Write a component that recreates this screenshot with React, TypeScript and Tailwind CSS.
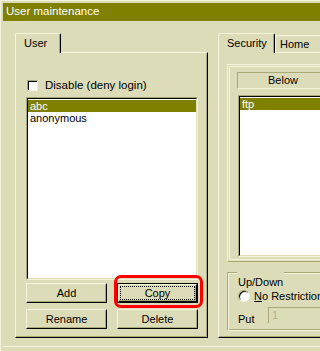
import type { ReactNode } from "react";

// Win98-ish khaki colour scheme
// face #dcdcb8, light #f4f4dc, shadow #a8a878, dark #000

function Button({ label, focused }: { label: string; focused?: boolean }) {
  if (focused) {
    return (
      <div className="h-[20px] w-[81px] border border-black">
        <div className="flex h-full w-full items-center justify-center border-t border-l border-t-[#f4f4dc] border-l-[#f4f4dc] border-r border-b border-r-black border-b-black shadow-[inset_-1px_-1px_0_#a8a878]">
          <div className="flex h-[12px] w-[73px] items-center justify-center outline-1 outline-dotted outline-black">
            {label}
          </div>
        </div>
      </div>
    );
  }
  return (
    <div className="flex h-[20px] w-[81px] items-center justify-center border-t border-l border-t-[#f4f4dc] border-l-[#f4f4dc] border-r border-b border-r-black border-b-black shadow-[inset_-1px_-1px_0_#a8a878]">
      {label}
    </div>
  );
}

function Tab({ label, active, width }: { label: string; active?: boolean; width: string }) {
  return active ? (
    <div
      className={`relative z-10 -mb-px flex h-[20px] shrink-0 items-center rounded-tl-[2px] rounded-tr-[2px] border-t border-l border-r border-t-[#f4f4dc] border-l-[#f4f4dc] border-r-black bg-[#dcdcb8] pl-[8px] pb-[1px] shadow-[inset_-1px_0_0_#a8a878] ${width}`}
    >
      {label}
    </div>
  ) : (
    <div
      className={`flex h-[17px] shrink-0 items-center rounded-tl-[2px] rounded-tr-[2px] border-t border-l border-r border-t-[#f4f4dc] border-l-[#f4f4dc] border-r-black pl-[4px] shadow-[inset_-1px_0_0_#a8a878] ${width}`}
    >
      {label}
    </div>
  );
}

function Panel({ children, className }: { children: ReactNode; className: string }) {
  return (
    <div
      className={`h-[286px] shrink-0 border-t border-l border-t-[#f4f4dc] border-l-[#f4f4dc] border-r border-b border-r-black border-b-black shadow-[inset_-1px_-1px_0_#a8a878] ${className}`}
    >
      {children}
    </div>
  );
}

function ListBox({ items, className }: { items: string[]; className: string }) {
  return (
    <div
      className={`border-t border-l border-t-[#a8a878] border-l-[#a8a878] border-r border-b border-r-[#f4f4dc] border-b-[#f4f4dc] ${className}`}
    >
      <div className="h-full w-full border-t border-l border-t-black border-l-black border-r border-b border-r-[#dcdcb8] border-b-[#dcdcb8] bg-white pt-[1px]">
        {items.map((item, i) => (
          <div
            key={item}
            className={`flex h-[12px] items-center pl-[2px] ${
              i === 0 ? "bg-[#808000] text-white" : "text-black"
            }`}
          >
            {item}
          </div>
        ))}
      </div>
    </div>
  );
}

export default function App() {
  return (
    <div className="relative h-[351px] w-full min-w-[287px] overflow-hidden bg-[#dcdcb8] font-['Liberation_Sans',Arial,sans-serif] text-[11px] leading-none text-black">
      <div className="flex h-full flex-col border-t border-l border-t-[#f4f4dc] border-l-[#f4f4dc] pt-[2px] pl-[2px]">
        <div className="flex h-[18px] shrink-0 items-center bg-[#808000] pl-[3px] text-[11.5px] text-white">
          User maintenance
        </div>

        <div className="flex gap-[10px] pt-[12px] pl-[12px]">
          {/* User tab */}
          <div className="flex w-[193px] shrink-0 flex-col">
            <div className="flex h-[19px] items-end">
              <Tab label="User" active width="w-[46px]" />
            </div>
            <Panel className="w-[193px] pl-[10px]">
              <div className="mt-[27px] ml-[1px] flex h-[11px] items-center gap-[7px]">
                <div className="h-[11px] w-[11px] border-t border-l border-t-[#a8a878] border-l-[#a8a878] border-r border-b border-r-[#f4f4dc] border-b-[#f4f4dc] bg-white shadow-[inset_1px_1px_0_#000]" />
                <span className="text-[11.5px]">Disable (deny login)</span>
              </div>
              <ListBox items={["abc", "anonymous"]} className="mt-[6px] h-[183px] w-[172px]" />
              <div className="mt-[3px] grid w-[172px] grid-cols-[81px_81px] gap-x-[10px] gap-y-[6px]">
                <Button label="Add" />
                <Button label="Copy" focused />
                <Button label="Rename" />
                <Button label="Delete" />
              </div>
            </Panel>
          </div>

          {/* Security tab, cut by the window edge */}
          <div className="flex min-w-0 flex-1 flex-col overflow-hidden">
            <div className="flex h-[19px] w-[140px] items-end">
              <Tab label="Security" active width="w-[57px]" />
              <Tab label="Home" width="w-[50px]" />
            </div>
            <Panel className="w-[140px] pl-[8px]">
              <div className="mt-[11px] h-[198px] border-t border-l border-t-[#f4f4dc] border-l-[#f4f4dc] border-b border-b-[#a8a878] p-px">
                <div className="h-full border-t border-l border-t-[#f4f4dc] border-l-[#f4f4dc] border-b border-b-[#f4f4dc] pt-[5px] pl-[7px]">
                  <div className="flex h-[17px] items-center border-t border-l border-t-[#a8a878] border-l-[#a8a878] border-b border-b-[#f4f4dc] pl-[30px]">
                    Below
                  </div>
                  <ListBox items={["ftp"]} className="mt-[6px] ml-[1px] h-[162px]" />
                </div>
              </div>

              <div className="relative mt-[10px] h-[59px] border-t border-l border-t-[#a8a878] border-l-[#a8a878] border-b border-b-[#f4f4dc] pl-[10px] shadow-[inset_1px_1px_0_#f4f4dc,inset_0_-1px_0_#a8a878]">
                <span className="absolute -top-[2px] left-[9px] bg-[#dcdcb8] px-[1px] pt-[5px] leading-[12px]">
                  Up/Down
                </span>
                <div className="mt-[17px] flex h-[12px] items-center gap-[4px]">
                  <div className="h-[12px] w-[12px] shrink-0 rounded-full border border-t-[#a8a878] border-l-[#a8a878] border-r-[#f4f4dc] border-b-[#f4f4dc] bg-white shadow-[inset_1px_1px_0_#000]" />
                  <span className="whitespace-nowrap">
                    <span className="underline">N</span>o Restriction
                  </span>
                </div>
                <div className="mt-[5px] flex h-[16px] items-center">
                  <span className="w-[30px] pt-[8px]">Put</span>
                  <div className="flex h-[16px] w-[60px] items-center border-t border-l border-t-[#a8a878] border-l-[#a8a878] pl-[3px] text-[#b4b488] shadow-[inset_1px_1px_0_#dcdcb8]">
                    1
                  </div>
                </div>
              </div>
            </Panel>
          </div>
        </div>

        <div className="mt-[8px] h-px bg-[#f4f4dc]" />
      </div>

      {/* red annotation around Copy */}
      <div className="pointer-events-none absolute top-[275px] left-[114px] h-[33px] w-[89px] rounded-[7px] border-[3px] border-[#ff0000]" />
    </div>
  );
}
